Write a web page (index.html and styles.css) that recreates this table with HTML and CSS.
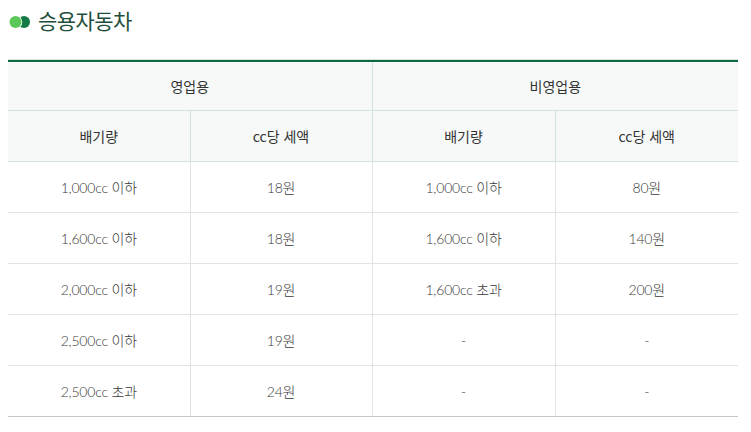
FILE: index.html
```html
<!DOCTYPE html>
<html lang="ko">
<head>
<meta charset="utf-8">
<link rel="stylesheet" href="styles.css">
</head>
<body>
<div class="page">
  <h2 class="title">
    <svg class="dot" width="22" height="14" viewBox="0 0 22 14">
      <circle cx="15" cy="7" r="6" fill="#137a45"/>
      <circle cx="6.5" cy="7" r="6.8" fill="#fff"/>
      <circle cx="6.5" cy="7" r="6" fill="#5cc85a"/>
    </svg>
    <span>승용자동차</span>
  </h2>
  <table class="tax">
    <colgroup>
      <col class="c1"><col class="c1"><col class="c2"><col class="c2">
    </colgroup>
    <thead>
      <tr class="h1">
        <th colspan="2" class="div">영업용</th>
        <th colspan="2">비영업용</th>
      </tr>
      <tr class="h2">
        <th class="div">배기량</th>
        <th class="div">cc당 세액</th>
        <th class="div">배기량</th>
        <th>cc당 세액</th>
      </tr>
    </thead>
    <tbody>
      <tr><td>1,000cc 이하</td><td>18원</td><td>1,000cc 이하</td><td>80원</td></tr>
      <tr><td>1,600cc 이하</td><td>18원</td><td>1,600cc 이하</td><td>140원</td></tr>
      <tr><td>2,000cc 이하</td><td>19원</td><td>1,600cc 초과</td><td>200원</td></tr>
      <tr><td>2,500cc 이하</td><td>19원</td><td>-</td><td>-</td></tr>
      <tr><td>2,500cc 초과</td><td>24원</td><td>-</td><td>-</td></tr>
    </tbody>
  </table>
</div>
</body>
</html>
```
FILE: styles.css
```css
html, body {
  margin: 0;
  padding: 0;
  background: #fff;
}
.page {
  padding: 8px 13px 0 8px;
}
.title {
  display: flex;
  align-items: center;
  gap: 7px;
  margin: 0 0 28px 0;
  height: 24px;
  font-family: "Noto Sans CJK KR", "Noto Sans", sans-serif;
  font-size: 21px;
  font-weight: 400;
  letter-spacing: -0.6px;
  color: #1f4f3c;
  line-height: 24px;
}
.dot {
  display: block;
  margin: 3px 0 0 1px;
}
.tax {
  width: 730px;
  border-collapse: collapse;
  table-layout: fixed;
  border-top: 2px solid #0f6a43;
  box-shadow: 0 -1px 0 #d8e4de;
  border-bottom: 1px solid #c5c9c7;
}
.tax .c1 {
  width: 182px;
}
.tax .c2 {
  width: 183px;
}
.tax th {
  font-family: "Noto Sans CJK KR", "Noto Sans", sans-serif;
  font-weight: 400;
  font-size: 14px;
  color: #333;
  background: #f6f9f8;
  border-bottom: 1px solid #d3e2dc;
  padding: 0;
  text-align: center;
}
.tax .h1 th {
  height: 48px;
}
.tax .h2 th {
  height: 50px;
}
.tax th.div {
  border-right: 1px solid #d3e2dc;
}
.tax td {
  font-family: "Lato", "Noto Sans CJK KR", sans-serif;
  font-weight: 300;
  font-size: 14px;
  letter-spacing: -0.2px;
  color: #3a3a3a;
  text-align: center;
  height: 50px;
  padding: 0;
  border-bottom: 1px solid #e1e3e2;
  border-right: 1px solid #e1e3e2;
}
.tax td:last-child {
  border-right: none;
}
.tax tbody tr:last-child td {
  border-bottom: 1px solid #c5c9c7;
}
```
